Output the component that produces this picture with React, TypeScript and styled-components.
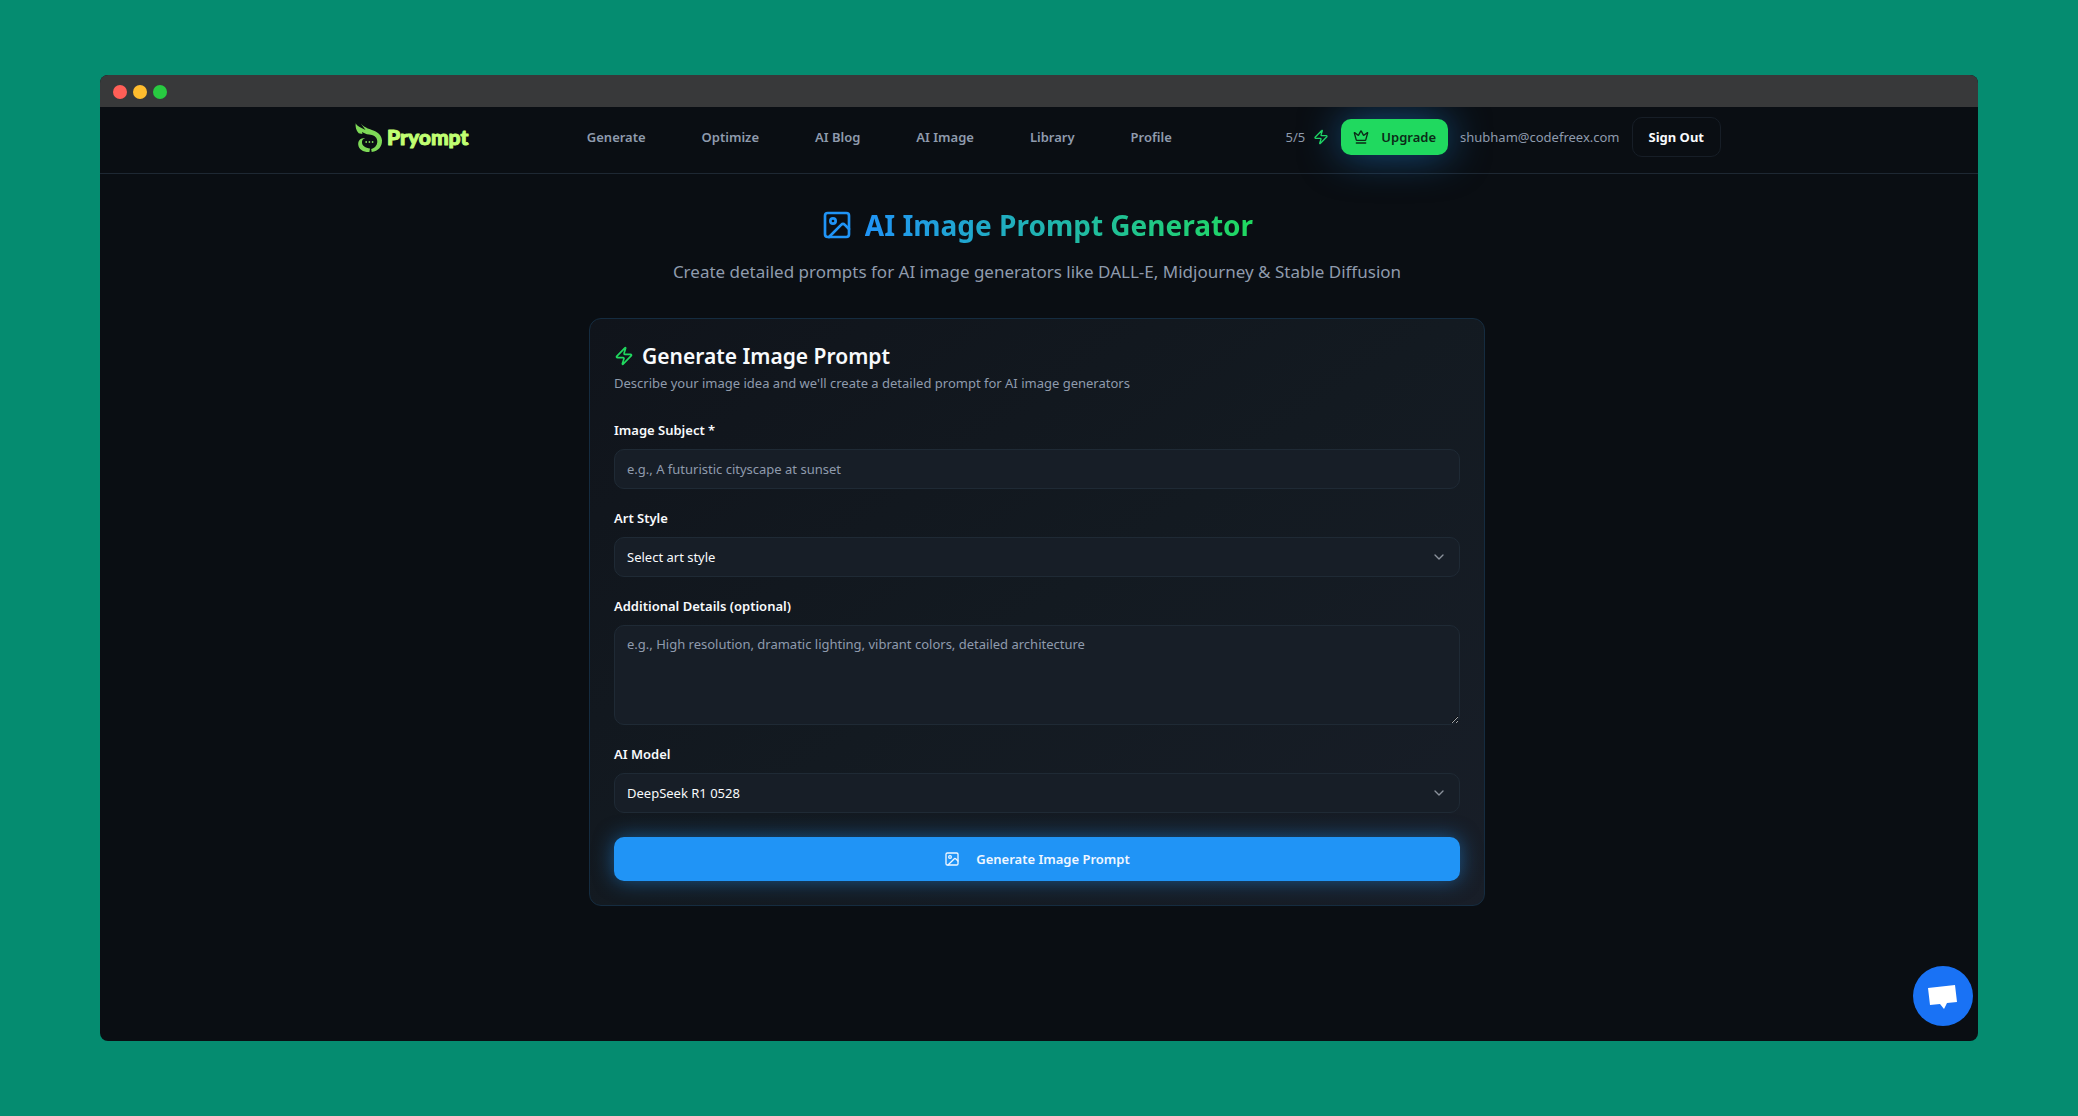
import React, { useState } from "react";
import styled, { createGlobalStyle } from "styled-components";
import { ChevronDown, Crown, Image as ImageIcon, Zap } from "lucide-react";

const GlobalStyle = createGlobalStyle`
  *, *::before, *::after { box-sizing: border-box; }
  body {
    margin: 0;
    background: #058c70;
    color: #f8fafc;
    font-family: "Segoe UI", "Noto Sans", "Open Sans", sans-serif;
    font-size: 13px;
    line-height: 20px;
  }
  button, input, select, textarea { font: inherit; color: inherit; }
`;

const Desktop = styled.div`
  min-height: 100vh;
  padding: 75px 100px;
  display: flex;
`;

const BrowserWindow = styled.div`
  position: relative;
  flex: 1;
  display: flex;
  flex-direction: column;
  overflow: hidden;
  border-radius: 8px;
  background: #0a0e13;
`;

const TitleBar = styled.div`
  position: relative;
  z-index: 1;
  display: flex;
  align-items: center;
  gap: 6px;
  height: 32px;
  padding: 2px 13px 0;
  background: #38393a;
`;

const Light = styled.span<{ $color: string }>`
  width: 14px;
  height: 14px;
  border-radius: 50%;
  background: ${(p) => p.$color};
`;

const Header = styled.header`
  padding: 10px 4px 16px 0;
  border-bottom: 1px solid #1e2833;
`;

const HeaderInner = styled.div`
  display: flex;
  align-items: center;
  justify-content: space-between;
  max-width: 1400px;
  margin: 0 auto;
  padding: 0 16px;
`;

const Brand = styled.a`
  display: flex;
  width: 120px;
  height: 40px;
`;

const Nav = styled.nav`
  display: flex;
  gap: 56px;
`;

const NavLink = styled.a`
  color: #8f9bad;
  font-weight: 600;
  text-decoration: none;
`;

const Account = styled.div`
  display: flex;
  align-items: center;
  gap: 12px;
  color: #8f9bad;
`;

const Credits = styled.span`
  display: flex;
  align-items: center;
  gap: 8px;

  svg { color: #1fd75f; }
`;

const Upgrade = styled.button`
  display: flex;
  align-items: center;
  gap: 12px;
  height: 36px;
  padding: 0 12px;
  border: 0;
  border-radius: 10px;
  background: #20d95f;
  color: #0b2a17;
  font-weight: 600;
  box-shadow: 0 0 40px rgba(32, 148, 246, 0.5);
`;

const SignOut = styled.button`
  height: 40px;
  padding: 0 16px;
  border: 1px solid #171e27;
  border-radius: 10px;
  background: #0a0e13;
  color: #f8fafc;
  font-weight: 700;
`;

const Main = styled.main`
  width: 100%;
  padding: 32px 4px 32px 0;
`;

const Hero = styled.div`
  display: flex;
  flex-direction: column;
  align-items: center;
  gap: 14px;
  margin-bottom: 32px;
`;

const HeroTitle = styled.h1`
  display: flex;
  align-items: center;
  gap: 12px;
  margin: 0;
  font-size: 28px;
  line-height: 38px;
  font-weight: 700;

  svg { color: #2094f6; }
`;

const GradientText = styled.span`
  background: linear-gradient(90deg, #2094f6, #20d95f);
  background-clip: text;
  -webkit-background-clip: text;
  color: transparent;
`;

const HeroText = styled.p`
  margin: 0;
  color: #8f9bad;
  font-size: 17px;
  line-height: 28px;
`;

const Card = styled.section`
  max-width: 896px;
  margin: 0 auto;
  padding: 24px;
  border: 1px solid #152c40;
  border-radius: 12px;
  background: linear-gradient(145deg, #10141b, #131a21 50%, #181e28);
`;

const CardTitle = styled.h2`
  display: flex;
  align-items: center;
  gap: 8px;
  margin: 0 0 4px;
  font-size: 21px;
  line-height: 26px;
  font-weight: 600;

  svg { color: #20d95f; }
`;

const CardText = styled.p`
  margin: 0 0 28px;
  color: #8f9bad;
`;

const Form = styled.form`
  display: flex;
  flex-direction: column;
  gap: 20px;
`;

const Field = styled.div`
  display: flex;
  flex-direction: column;
  gap: 10px;
`;

const Label = styled.label`
  font-weight: 600;
  line-height: 18px;
`;

const controlStyle = `
  display: block;
  width: 100%;
  height: 40px;
  padding: 8px 12px;
  border: 1px solid #1f2a35;
  border-radius: 10px;
  background: #171e27;
  outline: none;

  &::placeholder { color: #8f9bad; opacity: 1; }
  &:focus-visible { border-color: #2094f6; }
`;

const TextInput = styled.input`
  ${controlStyle}
`;

const TextArea = styled.textarea`
  ${controlStyle}
  height: 100px;
  resize: vertical;
`;

const SelectWrap = styled.div`
  display: grid;
  align-items: center;

  > * { grid-area: 1 / 1; }
  > svg {
    justify-self: end;
    margin-right: 13px;
    color: #8b929c;
    pointer-events: none;
  }
`;

const Select = styled.select`
  ${controlStyle}
  appearance: none;
`;

const Submit = styled.button`
  display: flex;
  align-items: center;
  justify-content: center;
  gap: 16px;
  height: 44px;
  margin-top: 4px;
  border: 0;
  border-radius: 10px;
  background: #2094f6;
  color: #f0f7ff;
  font-weight: 600;
  box-shadow: 0 0 20px rgba(32, 148, 246, 0.5);
`;

const ChatButton = styled.button`
  position: absolute;
  right: 5px;
  bottom: 15px;
  width: 60px;
  height: 60px;
  padding: 0;
  border: 0;
  border-radius: 50%;
  background: #1972f5;
`;

const navItems = ["Generate", "Optimize", "AI Blog", "AI Image", "Library", "Profile"];
const artStyles = ["Select art style", "Photorealistic", "Digital Art", "Oil Painting", "Watercolor"];
const models = ["DeepSeek R1 0528", "Llama 3.3 70B", "Gemini 2.0 Flash"];

function Logo() {
  return (
    <svg width="120" height="40" viewBox="0 0 120 40" role="img" aria-label="Pryompt">
      <g fill="#7ed957">
        <path d="M2.7 6.3 C3.6 8 5 9.2 6.6 10 L12.5 13 L7.6 6.3 C10.5 10.2 15 11.6 20.3 13.6 C25.6 15.8 28.7 18.8 29 23.5 C29.2 29.5 25.4 34 18.7 35 L18.2 31.9 C22.3 30.8 24.8 27.4 24.2 23.4 C23.5 19.4 20.2 17.9 16 17.5 C13 17.2 11 16.2 9 15 L9.4 17 L5.7 16.3 C3 13.6 2.2 9.6 2.7 6.3 Z" />
        <path d="M12.4 21.1 C8.6 21.8 8 26.2 10.4 28.8 C12.4 30.8 15 31.4 17 31.6 L16.4 35 C10.6 35.3 5.6 32.4 5.2 27.4 C5 23.5 8 20.6 12.4 21.1 Z" />
        <circle cx="13.2" cy="25" r="0.9" />
        <circle cx="16.4" cy="25" r="0.9" />
        <circle cx="19.6" cy="25" r="0.9" />
      </g>
      <text
        x="34"
        y="28"
        fill="#c1ff72"
        stroke="#c1ff72"
        strokeWidth="1"
        strokeLinejoin="round"
        fontFamily="Lato, sans-serif"
        fontWeight="900"
        fontSize="21"
      >
        Pryompt
      </text>
    </svg>
  );
}

function SelectField({ id, label, options }: { id: string; label: string; options: string[] }) {
  const [value, setValue] = useState(options[0]);
  return (
    <Field>
      <Label htmlFor={id}>{label}</Label>
      <SelectWrap>
        <Select id={id} value={value} onChange={(e) => setValue(e.target.value)}>
          {options.map((o) => (
            <option key={o}>{o}</option>
          ))}
        </Select>
        <ChevronDown size={16} />
      </SelectWrap>
    </Field>
  );
}

export default function App() {
  return (
    <>
      <GlobalStyle />
      <Desktop>
        <BrowserWindow>
          <TitleBar>
            <Light $color="#ff5f57" />
            <Light $color="#ffbd2e" />
            <Light $color="#28ca41" />
          </TitleBar>
          <Header>
            <HeaderInner>
              <Brand href="#">
                <Logo />
              </Brand>
              <Nav>
                {navItems.map((item) => (
                  <NavLink key={item} href="#">
                    {item}
                  </NavLink>
                ))}
              </Nav>
              <Account>
                <Credits>
                  5/5
                  <Zap size={16} />
                </Credits>
                <Upgrade type="button">
                  <Crown size={16} />
                  Upgrade
                </Upgrade>
                <span>shubham@codefreex.com</span>
                <SignOut type="button">Sign Out</SignOut>
              </Account>
            </HeaderInner>
          </Header>
          <Main>
            <Hero>
              <HeroTitle>
                <ImageIcon size={32} />
                <GradientText>AI Image Prompt Generator</GradientText>
              </HeroTitle>
              <HeroText>
                Create detailed prompts for AI image generators like DALL-E, Midjourney &amp; Stable Diffusion
              </HeroText>
            </Hero>
            <Card>
              <CardTitle>
                <Zap size={20} />
                Generate Image Prompt
              </CardTitle>
              <CardText>Describe your image idea and we'll create a detailed prompt for AI image generators</CardText>
              <Form onSubmit={(e) => e.preventDefault()}>
                <Field>
                  <Label htmlFor="subject">Image Subject *</Label>
                  <TextInput id="subject" placeholder="e.g., A futuristic cityscape at sunset" />
                </Field>
                <SelectField id="style" label="Art Style" options={artStyles} />
                <Field>
                  <Label htmlFor="details">Additional Details (optional)</Label>
                  <TextArea
                    id="details"
                    placeholder="e.g., High resolution, dramatic lighting, vibrant colors, detailed architecture"
                  />
                </Field>
                <SelectField id="model" label="AI Model" options={models} />
                <Submit type="submit">
                  <ImageIcon size={16} />
                  Generate Image Prompt
                </Submit>
              </Form>
            </Card>
          </Main>
          <ChatButton type="button" aria-label="Open chat">
            <svg width="60" height="60" viewBox="0 0 60 60">
              <path fill="#fff" d="M15 22 L42 19 L44 36 L34 37 L31 43 L27 38 L17 39 Z" />
            </svg>
          </ChatButton>
        </BrowserWindow>
      </Desktop>
    </>
  );
}
